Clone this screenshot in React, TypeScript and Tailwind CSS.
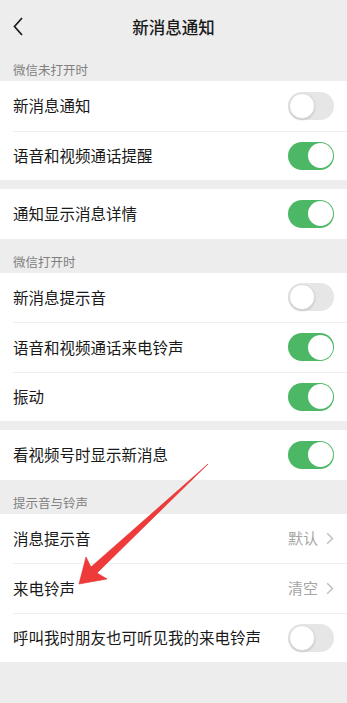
import * as React from "react";

type Item = {
  label: string;
  toggle?: boolean;
  value?: string;
};

const groups: { title?: string; items: Item[]; gapBefore?: boolean }[] = [
  {
    title: "微信未打开时",
    items: [
      { label: "新消息通知", toggle: false },
      { label: "语音和视频通话提醒", toggle: true },
    ],
  },
  { gapBefore: true, items: [{ label: "通知显示消息详情", toggle: true }] },
  {
    title: "微信打开时",
    items: [
      { label: "新消息提示音", toggle: false },
      { label: "语音和视频通话来电铃声", toggle: true },
      { label: "振动", toggle: true },
    ],
  },
  { gapBefore: true, items: [{ label: "看视频号时显示新消息", toggle: true }] },
  {
    title: "提示音与铃声",
    items: [
      { label: "消息提示音", value: "默认" },
      { label: "来电铃声", value: "清空" },
      { label: "呼叫我时朋友也可听见我的来电铃声", toggle: false },
    ],
  },
];

function Toggle({ on }: { on: boolean }) {
  return (
    <div
      className={
        on
          ? "flex h-[28px] w-[46px] items-center justify-end rounded-full bg-[#4cb866] p-[1.5px]"
          : "flex h-[28px] w-[46px] items-center justify-start rounded-full bg-[#e6e6e6] p-[1px]"
      }
    >
      <div
        className={
          on
            ? "h-[25px] w-[25px] rounded-full bg-white"
            : "h-[26px] w-[26px] rounded-full border border-[#dcdcdc] bg-white shadow-[0_1px_2px_rgba(0,0,0,0.15)]"
        }
      />
    </div>
  );
}

function Chevron() {
  return (
    <svg width="8" height="13" viewBox="0 0 8 13" fill="none">
      <path d="M1.2 1.2 L6.5 6.5 L1.2 11.8" stroke="#bdbdbd" strokeWidth="1.4" />
    </svg>
  );
}

function Row({ item, first }: { item: Item; first: boolean }) {
  return (
    <div className="flex h-[49.5px] bg-white pl-[13px]">
      <div
        className={
          "flex flex-1 items-center justify-between pr-[13px] " +
          (first ? "" : "border-t border-[#efefef]")
        }
      >
        <span className="text-[15.5px] text-[#191919]">{item.label}</span>
        {item.toggle !== undefined ? (
          <Toggle on={item.toggle} />
        ) : (
          <div className="flex items-center gap-[8px]">
            <span className="text-[15px] text-[#a6a6a6]">{item.value}</span>
            <Chevron />
          </div>
        )}
      </div>
    </div>
  );
}

function RedArrow() {
  return (
    <svg
      className="pointer-events-none absolute left-0 top-0"
      width="347"
      height="703"
      viewBox="0 0 347 703"
    >
      <polygon
        points="208,464 97,573 107,579 79,584 86,557 91,567"
        fill="#ef3a3a"
        stroke="#e02f2f"
        strokeWidth="0.6"
        strokeLinejoin="round"
      />
    </svg>
  );
}

export default function App() {
  return (
    <div className="relative min-h-[703px] w-[347px] overflow-hidden bg-[#ededed] font-[family-name:'Noto_Sans_CJK_SC',sans-serif]">
      <div className="relative flex h-[47px] items-center justify-center pt-[7px]">
        <svg
          className="absolute left-[13px] top-[17px]"
          width="10"
          height="19"
          viewBox="0 0 10 19"
          fill="none"
        >
          <path d="M9 1 L1.5 9.5 L9 18" stroke="#1a1a1a" strokeWidth="1.7" />
        </svg>
        <span className="text-[16.5px] font-medium text-[#191919]">新消息通知</span>
      </div>

      {groups.map((group, gi) => (
        <div key={gi}>
          {group.title && (
            <div className="h-[34px] pl-[13px] pt-[14px] text-[12.5px] leading-[17px] text-[#808080]">
              {group.title}
            </div>
          )}
          {group.gapBefore && <div className="h-[9px]" />}
          {group.items.map((item, i) => (
            <Row key={item.label} item={item} first={i === 0} />
          ))}
        </div>
      ))}

      <RedArrow />
    </div>
  );
}
